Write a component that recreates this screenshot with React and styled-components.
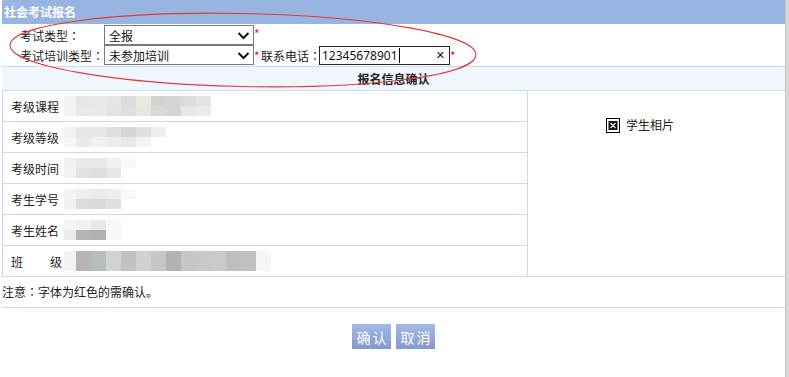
import React from 'react'
import styled, {createGlobalStyle} from 'styled-components'

const GlobalStyle = createGlobalStyle`
  html, body {
    margin: 0;
    padding: 0;
    background: #ffffff;
  }
  body {
    font-family: "Noto Sans CJK SC", "Noto Sans", sans-serif;
    font-size: 12px;
    color: #222222;
    text-spacing-trim: space-all;
  }
`

const Screen = styled.div`
  display: flex;
  width: 789px;
  height: 377px;
  overflow: hidden;
`

const Frame = styled.div`
  position: relative;
  flex: 1;
  margin-left: 2px;
  display: flex;
  flex-direction: column;
`

const ScrollStrip = styled.div`
  width: 3px;
  background: #d8d8d8;
  border-left: 1px solid #c4c4c4;
`

const Header = styled.div`
  height: 24px;
  line-height: 23px;
  background: #98b4e0;
  color: #ffffff;
  font-weight: bold;
  padding-left: 2px;
`

const FormArea = styled.div`
  padding: 1px 0 1px 18px;
`

const FormRow = styled.div`
  display: flex;
  align-items: center;
  height: 20px;
`

const Label = styled.span`
  width: 84px;
  white-space: nowrap;
`

// centred full-width colon, as the page's font draws it
const Colon = styled.span`
  font-family: "Noto Sans CJK TC", "Noto Sans CJK SC", sans-serif;
`

const SelectBox = styled.div`
  box-sizing: border-box;
  width: 150px;
  height: 20px;
  border: 1px solid #7a7a7a;
  background: #fff;
  display: flex;
  align-items: center;
  justify-content: space-between;
  padding: 0 3px 0 4px;
  color: #111;
`

const Star = styled.span`
  color: #e02020;
  width: 6px;
  margin-top: ${p => p.$low ? '0' : '-4px'};
`

const PhoneLabel = styled.span`
  margin-left: 1px;
  width: 58px;
  white-space: nowrap;
`

const PhoneInput = styled.div`
  box-sizing: border-box;
  width: 131px;
  height: 19px;
  border: 1px solid #222;
  display: flex;
  align-items: center;
  padding: 0 4px 0 2px;
  color: #111;
  font-family: "Noto Sans", sans-serif;
  font-size: 12px;
`

const Caret = styled.span`
  width: 1px;
  height: 15px;
  background: #000;
  margin-left: 1px;
`

const Clear = styled.span`
  margin-left: auto;
  font-size: 11px;
  font-family: "DejaVu Sans", sans-serif;
`

const Band = styled.div`
  height: 23px;
  line-height: 23px;
  border-top: 1px solid #c6dcee;
  border-bottom: 1px solid #c6dcee;
  background: #eff6fd;
  text-align: center;
  font-weight: bold;
`

const InfoTable = styled.div`
  display: grid;
  grid-template-columns: 525px 1fr;
  border-left: 1px solid #c6dcee;
  border-bottom: 1px solid #c6dcee;
`

const LeftCol = styled.div`
  border-right: 1px solid #c6dcee;
`

const InfoRow = styled.div`
  height: 30px;
  display: flex;
  align-items: center;
  padding-left: 8px;
  border-bottom: ${p => p.$last ? 'none' : '1px solid #c6dcee'};
`

const RowLabel = styled.span`
  width: 52px;
  white-space: nowrap;
`

const SpacedLabel = styled.span`
  width: 52px;
  display: flex;
  justify-content: space-between;
  padding-right: 1px;
  box-sizing: border-box;
`

const Mosaic = styled.div`
  display: flex;
  filter: blur(0.6px);
  margin-left: 1px;
`

const MosaicCol = styled.div`
  width: ${p => p.$w}px;
  display: flex;
  flex-direction: column;
`

const Tile = styled.div`
  height: 10px;
`

const PhotoCell = styled.div`
  display: flex;
  align-items: flex-start;
  padding: 25px 0 0 78px;
  gap: 6px;
`

const Note = styled.div`
  height: 30px;
  line-height: 30px;
  border-bottom: 1px solid #c6dcee;
`

const ButtonBar = styled.div`
  display: flex;
  justify-content: center;
  gap: 5px;
  padding-top: 16px;
`

const Button = styled.button`
  width: 39px;
  height: 25px;
  border: none;
  padding: 0;
  background: linear-gradient(#a3bbe8, #8399cc);
  color: #ffffff;
  font-family: "Noto Sans CJK SC", sans-serif;
  font-size: 14px;
  letter-spacing: 2px;
  text-indent: 2px;
  cursor: pointer;
`

const Overlay = styled.svg`
  position: absolute;
  left: -2px;
  top: 0;
  pointer-events: none;
`

const Chevron = () => (
  <svg width="13" height="9" viewBox="0 0 13 9">
    <path d="M1.5 2 L6.5 7 L11.5 2" fill="none" stroke="#111" strokeWidth="2" />
  </svg>
)

const BrokenImg = () => (
  <svg width="14" height="15" viewBox="0 0 14 15" style={{marginTop: 2}}>
    <rect x="0.5" y="0.5" width="13" height="14" fill="#fff" stroke="#000" />
    <rect x="2.5" y="3" width="9" height="9" fill="#111" />
    <path d="M4.5 5 L9.5 10 M9.5 5 L4.5 10" stroke="#e8e8e8" strokeWidth="1.3" />
  </svg>
)

const grays = {
  course: [['#f4f4f4', '#f4f4f4'], ['#e6e6e6', '#e8e8e8'], ['#e8e8e8', '#eaeaea'], ['#e6e6e6', '#e4e4e4'], ['#dcdcdc', '#dedede'], ['#e8e8e4', '#e6e6e2'], ['#d2d2d2', '#d8d8d8'], ['#d6d6d6', '#d4d4d4'], ['#dcdcdc', '#e6e6e6'], ['#e4e4e4', '#ebebeb']],
  level: [['#f2f2f2', '#f6f6f6'], ['#e4e6e8', '#eaeaea'], ['#e6e6e6', '#f0f0f0'], ['#dedede', '#ececec'], ['#d6d6d6', '#e8e8e8'], ['#e0e0e0', '#f2f2f2'], ['#eeeff2', '#ffffff']],
  time: [['#f0f0f0', '#f2f2f2'], ['#e8eaec', '#e2e2e2'], ['#e8e8e8', '#dedede'], ['#eef0f2', '#e6e6e6'], ['#f8f9fb', '#ffffff']],
  number: [['#f4f4f4', '#f0f0f0'], ['#eeeeee', '#dcdcdc'], ['#eaeaea', '#dadada'], ['#eeeeee', '#e0e0e0'], ['#f8f8fa', '#ffffff']],
  name: [['#f4f4f4', '#ececec'], ['#f0f0f0', '#b6b4b4'], ['#e8e8e8', '#b2b0b0'], ['#f8f8f8', '#f8f8f8']],
  klass: [['#f2f2f0', '#f2f2f0'], ['#b6b4b6', '#b6b4b6'], ['#b8bcbe', '#b8bcbe'], ['#d4d2ce', '#d4d2ce'], ['#c2c2be', '#c2c2be'], ['#d0d0ce', '#d0d0ce'], ['#c8c6c8', '#c8c6c8'], ['#b4b2b2', '#b4b2b2'], ['#c6c6c4', '#c6c6c4'], ['#c8c8c6', '#c8c8c6'], ['#cacaca', '#cacaca'], ['#c0bebc', '#c0bebc'], ['#c4c2c0', '#c4c2c0'], ['#f6f6f6', '#f6f6f6']],
}

const Blur = ({cols, w = 15}) => (
  <Mosaic>
    {cols.map((c, i) => (
      <MosaicCol key={i} $w={i === 0 ? 12 : w}>
        <Tile style={{background: c[0]}} />
        <Tile style={{background: c[1]}} />
      </MosaicCol>
    ))}
  </Mosaic>
)

const rows = [
  {label: '考级课程', colon: false, cols: grays.course},
  {label: '考级等级', colon: true, cols: grays.level},
  {label: '考级时间', colon: true, cols: grays.time},
  {label: '考生学号', colon: true, cols: grays.number},
  {label: '考生姓名', colon: true, cols: grays.name},
]

export default function App() {
  return (
    <Screen>
      <GlobalStyle />
      <Frame>
        <Header>社会考试报名</Header>
        <FormArea>
          <FormRow>
            <Label>考试类型<Colon>：</Colon></Label>
            <SelectBox>全报<Chevron /></SelectBox>
            <Star>*</Star>
          </FormRow>
          <FormRow>
            <Label>考试培训类型<Colon>：</Colon></Label>
            <SelectBox>未参加培训<Chevron /></SelectBox>
            <Star $low>*</Star>
            <PhoneLabel>联系电话<Colon>：</Colon></PhoneLabel>
            <PhoneInput>
              12345678901<Caret />
              <Clear>✕</Clear>
            </PhoneInput>
            <Star $low>*</Star>
          </FormRow>
        </FormArea>
        <Band>报名信息确认</Band>
        <InfoTable>
          <LeftCol>
            {rows.map(r => (
              <InfoRow key={r.label}>
                <RowLabel>{r.label}{r.colon && <Colon>：</Colon>}</RowLabel>
                <Blur cols={r.cols} />
              </InfoRow>
            ))}
            <InfoRow $last>
              <SpacedLabel><span>班</span><span>级</span></SpacedLabel>
              <Blur cols={grays.klass} />
            </InfoRow>
          </LeftCol>
          <PhotoCell>
            <BrokenImg />
            <span>学生相片</span>
          </PhotoCell>
        </InfoTable>
        <Note>注意<Colon>：</Colon>字体为红色的需确认。</Note>
        <ButtonBar>
          <Button>确认</Button>
          <Button>取消</Button>
        </ButtonBar>
        <Overlay width="789" height="100" viewBox="0 0 789 100">
          <ellipse cx="243" cy="50" rx="233" ry="36.5" transform="rotate(1.2 243 50)"
            fill="none" stroke="#e23a3a" strokeWidth="1.1" />
        </Overlay>
      </Frame>
      <ScrollStrip />
    </Screen>
  )
}
